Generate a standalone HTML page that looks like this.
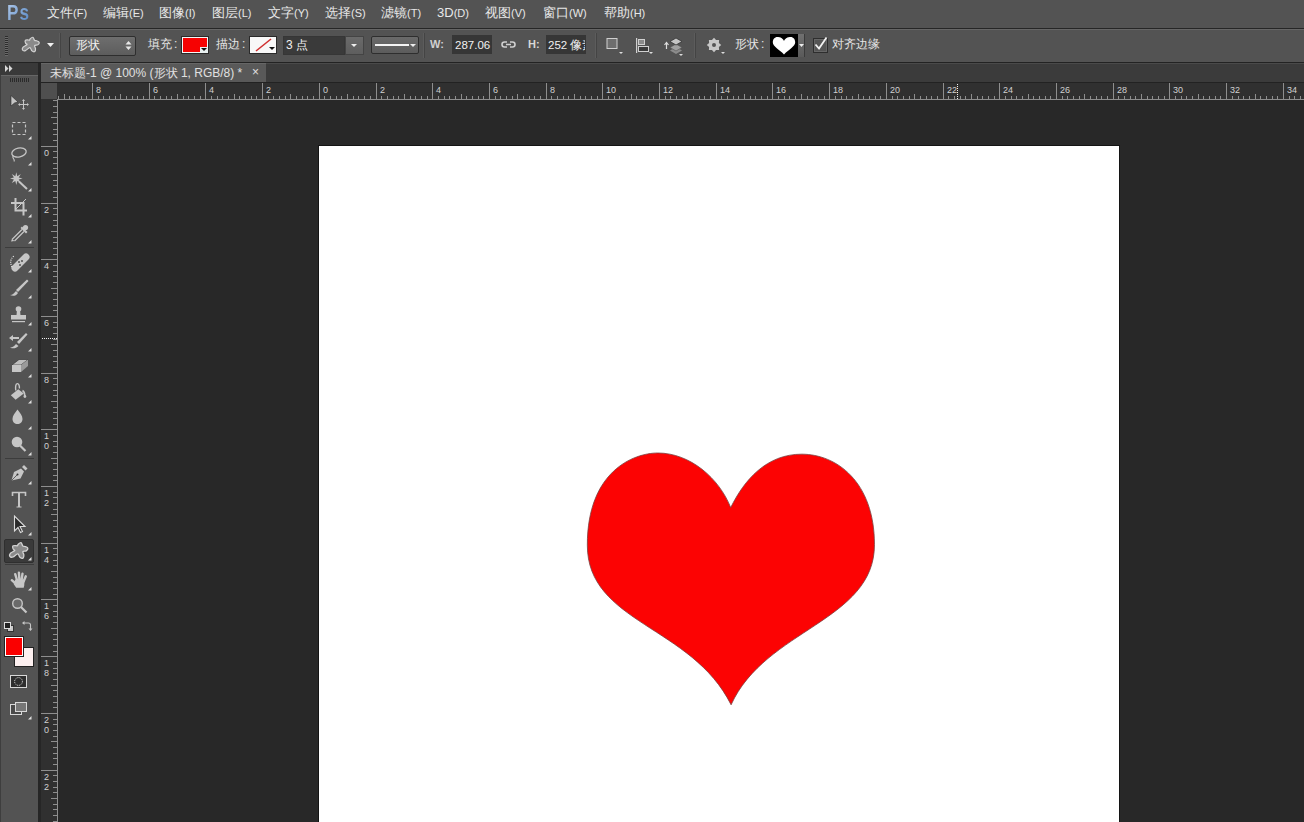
<!DOCTYPE html><html><head><meta charset="utf-8"><style>
*{box-sizing:border-box}
html,body{margin:0;padding:0}
body{width:1304px;height:822px;overflow:hidden;position:relative;background:#282828;font-family:"Liberation Sans",sans-serif;color:#e6e6e6}
.a{position:absolute}
.mi{position:absolute;top:5px;font-size:13px;line-height:16px;white-space:nowrap;color:#e8e8e8}
.mi span{font-size:11px}
.lbl{position:absolute;font-size:12px;line-height:14px;color:#e6e6e6;white-space:nowrap}
</style></head><body>
<div class="a" style="left:0;top:0;width:1304px;height:28px;background:#535353"></div>
<div class="a" style="left:7px;top:1px;font-size:22px;line-height:24px;font-weight:bold;color:#8db0dc;letter-spacing:1.5px;transform:scaleX(0.78);transform-origin:0 0;background:linear-gradient(135deg,#b4ccec,#4f82c0);-webkit-background-clip:text;background-clip:text;-webkit-text-fill-color:transparent">Ps</div>
<div class="mi" style="left:47px">文件<span>(F)</span></div>
<div class="mi" style="left:103px">编辑<span>(E)</span></div>
<div class="mi" style="left:159px">图像<span>(I)</span></div>
<div class="mi" style="left:212px">图层<span>(L)</span></div>
<div class="mi" style="left:268px">文字<span>(Y)</span></div>
<div class="mi" style="left:325px">选择<span>(S)</span></div>
<div class="mi" style="left:381px">滤镜<span>(T)</span></div>
<div class="mi" style="left:437px">3D<span>(D)</span></div>
<div class="mi" style="left:485px">视图<span>(V)</span></div>
<div class="mi" style="left:543px">窗口<span>(W)</span></div>
<div class="mi" style="left:604px">帮助<span>(H)</span></div>
<div class="a" style="left:0;top:28px;width:1304px;height:1px;background:#262626"></div>
<div class="a" style="left:0;top:29px;width:1304px;height:1px;background:#666"></div>
<div class="a" style="left:0;top:30px;width:1304px;height:32px;background:#535353"></div>
<div class="a" style="left:0;top:62px;width:1304px;height:1px;background:#232323"></div>
<div class="a" style="left:0;top:63px;width:1304px;height:1px;background:#4a4a4a"></div>
<div class="a" style="left:5px;top:36px;width:3px;height:1px;background:#2c2c2c"></div><div class="a" style="left:5px;top:37px;width:3px;height:1px;background:#6a6a6a"></div><div class="a" style="left:5px;top:38px;width:3px;height:1px;background:#2c2c2c"></div><div class="a" style="left:5px;top:39px;width:3px;height:1px;background:#6a6a6a"></div><div class="a" style="left:5px;top:40px;width:3px;height:1px;background:#2c2c2c"></div><div class="a" style="left:5px;top:41px;width:3px;height:1px;background:#6a6a6a"></div><div class="a" style="left:5px;top:42px;width:3px;height:1px;background:#2c2c2c"></div><div class="a" style="left:5px;top:43px;width:3px;height:1px;background:#6a6a6a"></div><div class="a" style="left:5px;top:44px;width:3px;height:1px;background:#2c2c2c"></div><div class="a" style="left:5px;top:45px;width:3px;height:1px;background:#6a6a6a"></div><div class="a" style="left:5px;top:46px;width:3px;height:1px;background:#2c2c2c"></div><div class="a" style="left:5px;top:47px;width:3px;height:1px;background:#6a6a6a"></div><div class="a" style="left:5px;top:48px;width:3px;height:1px;background:#2c2c2c"></div><div class="a" style="left:5px;top:49px;width:3px;height:1px;background:#6a6a6a"></div><div class="a" style="left:5px;top:50px;width:3px;height:1px;background:#2c2c2c"></div><div class="a" style="left:5px;top:51px;width:3px;height:1px;background:#6a6a6a"></div><div class="a" style="left:5px;top:52px;width:3px;height:1px;background:#2c2c2c"></div><div class="a" style="left:5px;top:53px;width:3px;height:1px;background:#6a6a6a"></div><div class="a" style="left:5px;top:54px;width:3px;height:1px;background:#2c2c2c"></div><div class="a" style="left:5px;top:55px;width:3px;height:1px;background:#6a6a6a"></div><svg class="a" style="left:18px;top:32px" width="26" height="26" viewBox="0 0 26 26"><path d="M12.27 6.67 C12.82 6.19 14.23 5.09 14.90 5.30 C15.57 5.51 15.92 7.38 16.27 7.93 C16.62 8.48 16.61 8.45 17.00 8.60 C17.39 8.75 17.93 8.53 18.63 8.81 C19.33 9.10 21.02 9.62 21.20 10.30 C21.38 10.98 20.48 12.32 19.71 12.87 C18.95 13.42 16.97 12.96 16.60 13.60 C16.23 14.24 17.49 15.72 17.52 16.72 C17.55 17.72 17.40 19.24 16.80 19.60 C16.20 19.96 14.75 19.55 13.92 18.88 C13.09 18.21 12.88 15.65 11.80 15.60 C10.72 15.55 8.63 18.18 7.41 18.58 C6.20 18.98 4.89 18.58 4.50 18.00 C4.11 17.42 4.33 15.99 5.08 15.09 C5.83 14.19 8.58 13.24 9.00 12.60 C9.42 11.96 7.89 11.97 7.61 11.25 C7.32 10.54 6.86 8.84 7.30 8.30 C7.74 7.76 9.54 8.01 10.25 7.99 C10.97 7.98 11.26 8.42 11.60 8.20 C11.94 7.98 11.72 7.16 12.27 6.67Z" fill="#8a8a8a" stroke="#d4d4d4" stroke-width="1.2"/></svg><svg class="a" style="left:47px;top:43px" width="8" height="5"><path d="M0 0H7L3.5 4Z" fill="#f0f0f0"/></svg><div class="a" style="left:60px;top:33px;width:1px;height:25px;background:#444"></div><div class="a" style="left:59px;top:33px;width:1px;height:25px;background:#5c5c5c"></div><div class="a" style="left:69px;top:36px;width:67px;height:20px;border:1px solid #2e2e2e;border-radius:2px;background:linear-gradient(#6e6e6e,#5d5d5d)"></div><div class="lbl" style="left:76px;top:38px;font-size:12px;color:#f2f2f2">形状</div><svg class="a" style="left:125px;top:40px" width="8" height="12"><path d="M0.5 4.5L3.5 1L6.5 4.5Z M0.5 6.5L3.5 10L6.5 6.5Z" fill="#e8e8e8"/></svg><div class="lbl" style="left:148px;top:37px;font-size:12px">填充<span style="margin-left:2px">:</span></div><div class="a" style="left:181px;top:36px;width:28px;height:18px;background:#2a2a2a"></div><div class="a" style="left:182px;top:37px;width:26px;height:16px;background:#f5f5f5"></div><div class="a" style="left:183px;top:38px;width:24px;height:14px;background:#f60202"></div><div class="a" style="left:200px;top:47px;width:8px;height:6px;background:#e8f0f0"></div><svg class="a" style="left:201px;top:48px" width="7" height="4"><path d="M0 0H6L3 3Z" fill="#111"/></svg><div class="lbl" style="left:216px;top:37px;font-size:12px">描边<span style="margin-left:2px">:</span></div><div class="a" style="left:249px;top:36px;width:28px;height:18px;background:#2a2a2a"></div><div class="a" style="left:250px;top:37px;width:26px;height:16px;background:#f8f8f8"></div><svg class="a" style="left:250px;top:37px" width="26" height="16"><path d="M6 14L21 2" stroke="#d03030" stroke-width="1.6"/><path d="M19 10H25L22 13Z" fill="#111"/></svg><div class="a" style="left:283px;top:36px;width:62px;height:19px;background:#3a3a3a;border:1px solid #363636"></div><div class="lbl" style="left:286px;top:38px;font-size:12px;color:#f0f0f0">3 点</div><div class="a" style="left:345px;top:36px;width:19px;height:19px;background:linear-gradient(#6a6a6a,#5e5e5e);border:1px solid #444"></div><svg class="a" style="left:351px;top:44px" width="7" height="4"><path d="M0 0H6L3 3Z" fill="#eee"/></svg><div class="a" style="left:371px;top:36px;width:48px;height:18px;background:linear-gradient(#6a6a6a,#5c5c5c);border:1px solid #2e2e2e;border-radius:2px"></div><div class="a" style="left:375px;top:44px;width:34px;height:2px;background:#f4f4f4"></div><svg class="a" style="left:410px;top:44px" width="7" height="4"><path d="M0 0H6L3 3Z" fill="#eee"/></svg><div class="a" style="left:424px;top:33px;width:1px;height:25px;background:#444"></div><div class="a" style="left:423px;top:33px;width:1px;height:25px;background:#5c5c5c"></div><div class="lbl" style="left:430px;top:37px;font-size:11px;font-weight:bold;color:#d0d0d0">W:</div><div class="a" style="left:452px;top:35px;width:40px;height:19px;background:#363636"></div><div class="lbl" style="left:455px;top:38px;font-size:11.5px;color:#f0f0f0">287.06</div><svg class="a" style="left:500px;top:39px" width="18" height="12"><path d="M7 3H4.5A2.5 2.5 0 0 0 4.5 8H7M10 3H12.5A2.5 2.5 0 0 1 12.5 8H10M6 5.5H11" fill="none" stroke="#d0d0d0" stroke-width="1.6"/></svg><div class="lbl" style="left:528px;top:37px;font-size:11px;font-weight:bold;color:#d8d8d8">H:</div><div class="a" style="left:546px;top:35px;width:40px;height:19px;background:#363636"></div><div class="lbl" style="left:548px;top:38px;font-size:11.5px;color:#f0f0f0;width:37px;overflow:hidden">252 像素</div><div class="a" style="left:596px;top:33px;width:1px;height:25px;background:#444"></div><div class="a" style="left:595px;top:33px;width:1px;height:25px;background:#5c5c5c"></div><svg class="a" style="left:604px;top:36px" width="20" height="20"><rect x="3" y="2.5" width="10" height="10" fill="#6e6e6e" stroke="#cfcfcf" stroke-width="1"/><path d="M15 16H19L17 18Z" fill="#ddd"/></svg><svg class="a" style="left:633px;top:36px" width="22" height="20"><rect x="3" y="2" width="1.2" height="15" fill="#d0d0d0"/><rect x="5.5" y="3.5" width="6" height="5" fill="#8a8a8a" stroke="#d0d0d0" stroke-width="1"/><rect x="5.5" y="10.5" width="10" height="5" fill="#3a3a3a" stroke="#d0d0d0" stroke-width="1"/><path d="M16 16H20L18 18Z" fill="#ddd"/></svg><svg class="a" style="left:662px;top:35px" width="24" height="22"><path d="M4.5 14V8M2.5 10L4.5 7.5L6.5 10" stroke="#ddd" stroke-width="1.2" fill="none"/><path d="M14 12L20 15.5L14 19L8 15.5Z" fill="#8c8c8c"/><path d="M14 9L20 12.5L14 16L8 12.5Z" fill="#a0a0a0" stroke="#555" stroke-width="0.6"/><path d="M14 3L20 6.5L14 10L8 6.5Z" fill="#c4c4c4" stroke="#333" stroke-width="0.8"/><path d="M17 19H21L19 21Z" fill="#ddd"/></svg><div class="a" style="left:695px;top:33px;width:1px;height:25px;background:#444"></div><div class="a" style="left:694px;top:33px;width:1px;height:25px;background:#5c5c5c"></div><svg class="a" style="left:700px;top:36px" width="28" height="20"><path d="M14.00 1.80 L16.03 4.10 L19.09 3.91 L18.90 6.97 L21.20 9.00 L18.90 11.03 L19.09 14.09 L16.03 13.90 L14.00 16.20 L11.97 13.90 L8.91 14.09 L9.10 11.03 L6.80 9.00 L9.10 6.97 L8.91 3.91 L11.97 4.10Z" fill="#c8c8c8"/><circle cx="14" cy="9" r="2" fill="#555"/><path d="M21 16H25L23 18Z" fill="#ddd"/></svg><div class="lbl" style="left:735px;top:37px;font-size:12px">形状<span style="margin-left:2px">:</span></div><div class="a" style="left:770px;top:34px;width:28px;height:23px;background:#000"></div><svg class="a" style="left:772px;top:36px" width="24" height="19" viewBox="0 0 24 19"><path d="M12 5 C10.5 1.5 7.5 1 5.5 1 C2.5 1 0.8 3.5 0.8 6.2 C0.8 10.5 7 13 12 18.5 C17 13 23.2 10.5 23.2 6.2 C23.2 3.5 21.5 1 18.5 1 C16.5 1 13.5 1.5 12 5Z" fill="#fff"/></svg><div class="a" style="left:798px;top:34px;width:7px;height:23px;background:linear-gradient(#707070,#5a5a5a);border-right:1px solid #3a3a3a"></div><svg class="a" style="left:799px;top:44px" width="6" height="4"><path d="M0 0H5L2.5 3Z" fill="#eee"/></svg><div class="a" style="left:813px;top:38px;width:15px;height:15px;background:#555;border:1px solid #2e2e2e;box-shadow:inset 0 0 0 1px #666"></div><svg class="a" style="left:812px;top:34px" width="20" height="18"><path d="M3.5 10.5L7 14.5L14.5 3.5" fill="none" stroke="#f2f2f2" stroke-width="1.8"/></svg><div class="lbl" style="left:832px;top:37px;font-size:12px">对齐边缘</div>
<div class="a" style="left:41px;top:64px;width:1263px;height:18px;background:#3b3b3b"></div>
<div class="a" style="left:41px;top:63px;width:225px;height:19px;background:#595959;border-top:1px solid #666"></div>
<div class="lbl" style="left:50px;top:66px;font-size:12px;color:#e0e0e0">未标题-1 @ 100% (形状 1, RGB/8) *</div>
<div class="lbl" style="left:252px;top:65px;font-size:12px;color:#e0e0e0">×</div>
<div class="a" style="left:41px;top:82px;width:1263px;height:1px;background:#222"></div>
<div class="a" style="left:0;top:63px;width:38px;height:759px;background:#535353;border-left:1px solid #3e3e3e"></div>
<div class="a" style="left:0;top:63px;width:38px;height:12px;background:#393939"></div>
<div class="a" style="left:1px;top:75px;width:37px;height:1px;background:#666"></div>
<div class="a" style="left:38px;top:63px;width:3px;height:759px;background:#262626"></div>
<svg class="a" style="left:5px;top:65px" width="9" height="7"><path d="M0 0L3.5 3.5L0 7Z M4 0L7.5 3.5L4 7Z" fill="#d8d8d8"/></svg><div class="a" style="left:10px;top:78px;width:1px;height:4px;background:#2a2a2a"></div><div class="a" style="left:12px;top:78px;width:1px;height:4px;background:#2a2a2a"></div><div class="a" style="left:14px;top:78px;width:1px;height:4px;background:#2a2a2a"></div><div class="a" style="left:16px;top:78px;width:1px;height:4px;background:#2a2a2a"></div><div class="a" style="left:18px;top:78px;width:1px;height:4px;background:#2a2a2a"></div><div class="a" style="left:20px;top:78px;width:1px;height:4px;background:#2a2a2a"></div><div class="a" style="left:22px;top:78px;width:1px;height:4px;background:#2a2a2a"></div><div class="a" style="left:24px;top:78px;width:1px;height:4px;background:#2a2a2a"></div><div class="a" style="left:26px;top:78px;width:1px;height:4px;background:#2a2a2a"></div><div class="a" style="left:28px;top:78px;width:1px;height:4px;background:#2a2a2a"></div><svg class="a" style="left:6px;top:92px" width="26" height="22" viewBox="0 0 26 22"><path d="M5 3.5V14L8.5 11L12 10Z" fill="#c6c6c6" stroke="#2a2a2a" stroke-width="0.6"/><path d="M17.5 8V17M13 12.5H22" stroke="#c6c6c6" stroke-width="1"/><path d="M17.5 7L16 9H19Z M17.5 18L16 16H19Z M12 12.5L14 11V14Z M23 12.5L21 11V14Z" fill="#c6c6c6"/></svg><svg class="a" style="left:6px;top:118px" width="26" height="22" viewBox="0 0 26 22"><rect x="6.5" y="4.5" width="13" height="12" fill="none" stroke="#c6c6c6" stroke-width="1.2" stroke-dasharray="3 2"/></svg><svg class="a" style="left:28px;top:136px" width="4" height="4"><path d="M3.5 0V3.5H0Z" fill="#e0e0e0"/></svg><svg class="a" style="left:6px;top:143px" width="26" height="22" viewBox="0 0 26 22"><ellipse cx="13" cy="9.5" rx="7.3" ry="4.5" transform="rotate(-12 13 9.5)" fill="none" stroke="#c6c6c6" stroke-width="1.3"/><path d="M7.5 12.5C6 14 7 15 8 16.5C8.5 17.5 8 18.5 8 18.5" fill="none" stroke="#c6c6c6" stroke-width="1.1"/></svg><svg class="a" style="left:28px;top:162px" width="4" height="4"><path d="M3.5 0V3.5H0Z" fill="#e0e0e0"/></svg><svg class="a" style="left:6px;top:170px" width="26" height="22" viewBox="0 0 26 22"><path d="M16.6 8.6 L12.7 9.6 L14.8 13.1 L11.3 11.0 L10.3 14.9 L9.3 11.0 L5.8 13.1 L7.9 9.6 L4.0 8.6 L7.9 7.6 L5.8 4.1 L9.3 6.2 L10.3 2.3 L11.3 6.2 L14.8 4.1 L12.7 7.6Z" fill="#c6c6c6"/><path d="M13 11.5L21 19" stroke="#c6c6c6" stroke-width="2"/></svg><svg class="a" style="left:28px;top:188px" width="4" height="4"><path d="M3.5 0V3.5H0Z" fill="#e0e0e0"/></svg><svg class="a" style="left:6px;top:196px" width="26" height="22" viewBox="0 0 26 22"><path d="M9.5 2V14.5H21M5 7H17.5V19.5" fill="none" stroke="#c6c6c6" stroke-width="2"/><path d="M10 13L20 3" stroke="#c6c6c6" stroke-width="1"/></svg><svg class="a" style="left:28px;top:214px" width="4" height="4"><path d="M3.5 0V3.5H0Z" fill="#e0e0e0"/></svg><svg class="a" style="left:6px;top:222px" width="26" height="22" viewBox="0 0 26 22"><path d="M6 17.5L16 7.5M8.5 19L18 9.5" stroke="#c6c6c6" stroke-width="1.2"/><path d="M5 19.5L6 17L8.5 19Z" fill="#c6c6c6"/><path d="M14.5 6L20 11.5L21.5 10L16 4.5Z" fill="#c6c6c6"/><circle cx="19.5" cy="5.5" r="2.6" fill="#c6c6c6"/></svg><svg class="a" style="left:28px;top:240px" width="4" height="4"><path d="M3.5 0V3.5H0Z" fill="#e0e0e0"/></svg><div class="a" style="left:5px;top:247px;width:29px;height:1px;background:#3c3c3c"></div><svg class="a" style="left:6px;top:251px" width="26" height="22" viewBox="0 0 26 22"><path d="M9 17L20 6" stroke="#c6c6c6" stroke-width="7" stroke-linecap="round"/><circle cx="13" cy="11" r="0.9" fill="#444"/><circle cx="16" cy="10" r="0.9" fill="#444"/><circle cx="14" cy="14" r="0.9" fill="#444"/><path d="M6 16C4 12 4 8 8 5" fill="none" stroke="#eee" stroke-width="1.2" stroke-dasharray="1 1.2"/></svg><svg class="a" style="left:28px;top:269px" width="4" height="4"><path d="M3.5 0V3.5H0Z" fill="#e0e0e0"/></svg><svg class="a" style="left:6px;top:277px" width="26" height="22" viewBox="0 0 26 22"><path d="M10 13L21 2.5L22.5 4L12 15Z" fill="#c6c6c6"/><path d="M4 18C7 18 8 16 10 14L12 16C10 19 7 19.5 4 18Z" fill="#c6c6c6"/></svg><svg class="a" style="left:28px;top:295px" width="4" height="4"><path d="M3.5 0V3.5H0Z" fill="#e0e0e0"/></svg><svg class="a" style="left:6px;top:303px" width="26" height="22" viewBox="0 0 26 22"><circle cx="12.5" cy="6" r="2.8" fill="#c6c6c6"/><path d="M11 7H14L14.5 12H10.5Z" fill="#c6c6c6"/><rect x="5" y="12" width="15" height="4.5" fill="#c6c6c6"/><rect x="6" y="18" width="13" height="1.2" fill="#c6c6c6"/></svg><svg class="a" style="left:28px;top:322px" width="4" height="4"><path d="M3.5 0V3.5H0Z" fill="#e0e0e0"/></svg><svg class="a" style="left:6px;top:329px" width="26" height="22" viewBox="0 0 26 22"><path d="M3 9L7 6V8H13V10H7V12Z" fill="#c6c6c6"/><path d="M11 13L20 4L21.5 5.5L13 15Z" fill="#c6c6c6"/><path d="M4 18.5C7 18.5 8 17 10 15L12.5 17C10 19.5 7 20 4 18.5Z" fill="#c6c6c6"/></svg><svg class="a" style="left:28px;top:348px" width="4" height="4"><path d="M3.5 0V3.5H0Z" fill="#e0e0e0"/></svg><svg class="a" style="left:6px;top:355px" width="26" height="22" viewBox="0 0 26 22"><path d="M6 10L13 4.5H22L15 10Z" fill="#bdbdbd" stroke="#2a2a2a" stroke-width="0.6"/><path d="M6 10H15V17H6Z" fill="#c6c6c6"/><path d="M15 10L22 4.5V11L15 17Z" fill="#9a9a9a"/></svg><svg class="a" style="left:28px;top:374px" width="4" height="4"><path d="M3.5 0V3.5H0Z" fill="#e0e0e0"/></svg><svg class="a" style="left:6px;top:381px" width="26" height="22" viewBox="0 0 26 22"><path d="M9.8 9.5C9.3 6 9.6 2.8 11.2 2.6C12.8 2.4 13.6 5 13.4 7.5" fill="none" stroke="#c6c6c6" stroke-width="1.4"/><path d="M12.3 8.2L17.8 12.6L9.6 18.8L4.8 14.2Z" fill="#c6c6c6"/><path d="M16.5 9.5C18.2 10.5 18.8 12.5 18.8 15" fill="none" stroke="#c6c6c6" stroke-width="1.5"/><circle cx="18.9" cy="15.5" r="1.4" fill="#c6c6c6"/></svg><svg class="a" style="left:28px;top:400px" width="4" height="4"><path d="M3.5 0V3.5H0Z" fill="#e0e0e0"/></svg><svg class="a" style="left:6px;top:407px" width="26" height="22" viewBox="0 0 26 22"><path d="M11.5 2.5C9 6 6.5 8.5 6.5 12C6.5 15 8.8 17 11.5 17C14.2 17 16.5 15 16.5 12C16.5 8.5 14 6 11.5 2.5Z" fill="#c6c6c6"/></svg><svg class="a" style="left:28px;top:426px" width="4" height="4"><path d="M3.5 0V3.5H0Z" fill="#e0e0e0"/></svg><svg class="a" style="left:6px;top:433px" width="26" height="22" viewBox="0 0 26 22"><circle cx="11" cy="9" r="5.3" fill="#c6c6c6"/><path d="M14 12.5L19.5 18" stroke="#c6c6c6" stroke-width="2.2"/></svg><svg class="a" style="left:28px;top:452px" width="4" height="4"><path d="M3.5 0V3.5H0Z" fill="#e0e0e0"/></svg><div class="a" style="left:5px;top:458px;width:29px;height:1px;background:#3c3c3c"></div><svg class="a" style="left:6px;top:462px" width="26" height="22" viewBox="0 0 26 22"><path d="M5.5 18.5L8 10L15 6.5L18 9.5L14.5 16.5Z" fill="#c6c6c6"/><path d="M16 5L19.5 8.5L21.5 6.5L18 3Z" fill="#c6c6c6"/><path d="M5.5 18.5L11 13" stroke="#333" stroke-width="0.7"/><circle cx="11.5" cy="12.5" r="1" fill="#333"/></svg><svg class="a" style="left:28px;top:481px" width="4" height="4"><path d="M3.5 0V3.5H0Z" fill="#e0e0e0"/></svg><svg class="a" style="left:6px;top:488px" width="26" height="22" viewBox="0 0 26 22"><path d="M6.5 8V4.5H19.5V8" fill="none" stroke="#c6c6c6" stroke-width="1.6"/><path d="M13 4.5V19" stroke="#c6c6c6" stroke-width="2"/><path d="M10.5 19H15.5" stroke="#c6c6c6" stroke-width="1"/></svg><svg class="a" style="left:6px;top:513px" width="26" height="22" viewBox="0 0 26 22"><path d="M8.5 3V18L12 14.5L14.5 19.5L16.5 18.5L14 13.5H19Z" fill="#2a2a2a" stroke="#dcdcdc" stroke-width="1.1"/></svg><svg class="a" style="left:28px;top:532px" width="4" height="4"><path d="M3.5 0V3.5H0Z" fill="#e0e0e0"/></svg><div class="a" style="left:4px;top:539px;width:30px;height:24px;background:#3a3a3a;border:1px solid #2f2f2f;border-radius:2px"></div><svg class="a" style="left:5px;top:537px" width="28" height="28" viewBox="0 0 26 26"><path d="M12.27 6.67 C12.82 6.19 14.23 5.09 14.90 5.30 C15.57 5.51 15.92 7.38 16.27 7.93 C16.62 8.48 16.61 8.45 17.00 8.60 C17.39 8.75 17.93 8.53 18.63 8.81 C19.33 9.10 21.02 9.62 21.20 10.30 C21.38 10.98 20.48 12.32 19.71 12.87 C18.95 13.42 16.97 12.96 16.60 13.60 C16.23 14.24 17.49 15.72 17.52 16.72 C17.55 17.72 17.40 19.24 16.80 19.60 C16.20 19.96 14.75 19.55 13.92 18.88 C13.09 18.21 12.88 15.65 11.80 15.60 C10.72 15.55 8.63 18.18 7.41 18.58 C6.20 18.98 4.89 18.58 4.50 18.00 C4.11 17.42 4.33 15.99 5.08 15.09 C5.83 14.19 8.58 13.24 9.00 12.60 C9.42 11.96 7.89 11.97 7.61 11.25 C7.32 10.54 6.86 8.84 7.30 8.30 C7.74 7.76 9.54 8.01 10.25 7.99 C10.97 7.98 11.26 8.42 11.60 8.20 C11.94 7.98 11.72 7.16 12.27 6.67Z" fill="#8a8a8a" stroke="#d4d4d4" stroke-width="1.2"/></svg><svg class="a" style="left:28px;top:557px" width="4" height="4"><path d="M3.5 0V3.5H0Z" fill="#e0e0e0"/></svg><div class="a" style="left:5px;top:564px;width:29px;height:1px;background:#3c3c3c"></div><svg class="a" style="left:6px;top:569px" width="26" height="22" viewBox="0 0 26 22"><g stroke="#c6c6c6" stroke-width="2.4" stroke-linecap="round"><path d="M11.3 12L9.2 5.2M13.4 11L12.9 3.6M15.6 11L16.5 4.6M17.6 12.5L19.8 7.3M10.2 15L5.8 11.2"/></g><path d="M9.3 10.5H18.6L18.2 16.5L17.7 18.8H10.2L7.6 15Z" fill="#c6c6c6"/></svg><svg class="a" style="left:28px;top:587px" width="4" height="4"><path d="M3.5 0V3.5H0Z" fill="#e0e0e0"/></svg><svg class="a" style="left:6px;top:593px" width="26" height="22" viewBox="0 0 26 22"><circle cx="11.5" cy="10.5" r="4.8" fill="#6a6a6a" stroke="#c6c6c6" stroke-width="1.4"/><path d="M15 14L20.5 19.5" stroke="#c6c6c6" stroke-width="2.2"/></svg><div class="a" style="left:7px;top:625px;width:7px;height:7px;background:#c8c8c8;border:1px solid #333"></div><div class="a" style="left:4px;top:622px;width:7px;height:7px;background:#222;border:1px solid #ddd"></div><svg class="a" style="left:21px;top:620px" width="12" height="12"><path d="M2.5 3H7.5C9 3 9.5 4 9.5 5V9" fill="none" stroke="#c6c6c6" stroke-width="1.1"/><path d="M1 3L3.5 1V5Z M9.5 11L7.5 8.5H11.5Z" fill="#c6c6c6"/></svg><div class="a" style="left:14px;top:647px;width:20px;height:20px;background:#222"></div><div class="a" style="left:15px;top:648px;width:18px;height:18px;background:#fdf0f0"></div><div class="a" style="left:4px;top:636px;width:20px;height:21px;background:#222"></div><div class="a" style="left:5px;top:637px;width:18px;height:19px;background:#fff"></div><div class="a" style="left:6px;top:638px;width:16px;height:17px;background:#fa0000"></div><div class="a" style="left:10px;top:675px;width:17px;height:13px;background:#2e2e2e;border:1px solid #d8d8d8"></div><svg class="a" style="left:13px;top:676px" width="11" height="11"><circle cx="5.5" cy="5.5" r="3.9" fill="none" stroke="#eee" stroke-width="1" stroke-dasharray="1 1.1"/></svg><div class="a" style="left:10px;top:704px;width:12px;height:11px;background:#4a4a4a;border:1px solid #d8d8d8"></div><div class="a" style="left:15px;top:702px;width:12px;height:10px;background:#777;border:1px solid #d8d8d8"></div><svg class="a" style="left:28px;top:716px" width="4" height="4"><path d="M3.5 0V3.5H0Z" fill="#e0e0e0"/></svg>
<div class="a" style="left:41px;top:83px;width:16px;height:16px;background:#4f4f4f"></div>
<div class="a" style="left:57px;top:83px;width:1247px;height:16px;background:#303030"></div>
<div class="a" style="left:41px;top:99px;width:16px;height:723px;background:#303030"></div>
<svg width="1247" height="17" style="position:absolute;left:57px;top:83px" shape-rendering="crispEdges"><rect x="0" y="16" width="1247" height="1" fill="#8e8e8e"/><rect x="1" y="13" width="1" height="3" fill="#8e8e8e"/><rect x="7" y="11" width="1" height="5" fill="#8e8e8e"/><rect x="12" y="13" width="1" height="3" fill="#8e8e8e"/><rect x="18" y="13" width="1" height="3" fill="#8e8e8e"/><rect x="24" y="13" width="1" height="3" fill="#8e8e8e"/><rect x="29" y="13" width="1" height="3" fill="#8e8e8e"/><rect x="35" y="0" width="1" height="16" fill="#8e8e8e"/><text x="39" y="10" font-size="9" fill="#d0d0d0" font-family="Liberation Sans, sans-serif">8</text><rect x="41" y="13" width="1" height="3" fill="#8e8e8e"/><rect x="46" y="13" width="1" height="3" fill="#8e8e8e"/><rect x="52" y="13" width="1" height="3" fill="#8e8e8e"/><rect x="58" y="13" width="1" height="3" fill="#8e8e8e"/><rect x="63" y="11" width="1" height="5" fill="#8e8e8e"/><rect x="69" y="13" width="1" height="3" fill="#8e8e8e"/><rect x="75" y="13" width="1" height="3" fill="#8e8e8e"/><rect x="80" y="13" width="1" height="3" fill="#8e8e8e"/><rect x="86" y="13" width="1" height="3" fill="#8e8e8e"/><rect x="92" y="0" width="1" height="16" fill="#8e8e8e"/><text x="96" y="10" font-size="9" fill="#d0d0d0" font-family="Liberation Sans, sans-serif">6</text><rect x="97" y="13" width="1" height="3" fill="#8e8e8e"/><rect x="103" y="13" width="1" height="3" fill="#8e8e8e"/><rect x="109" y="13" width="1" height="3" fill="#8e8e8e"/><rect x="114" y="13" width="1" height="3" fill="#8e8e8e"/><rect x="120" y="11" width="1" height="5" fill="#8e8e8e"/><rect x="126" y="13" width="1" height="3" fill="#8e8e8e"/><rect x="131" y="13" width="1" height="3" fill="#8e8e8e"/><rect x="137" y="13" width="1" height="3" fill="#8e8e8e"/><rect x="143" y="13" width="1" height="3" fill="#8e8e8e"/><rect x="148" y="0" width="1" height="16" fill="#8e8e8e"/><text x="152" y="10" font-size="9" fill="#d0d0d0" font-family="Liberation Sans, sans-serif">4</text><rect x="154" y="13" width="1" height="3" fill="#8e8e8e"/><rect x="160" y="13" width="1" height="3" fill="#8e8e8e"/><rect x="165" y="13" width="1" height="3" fill="#8e8e8e"/><rect x="171" y="13" width="1" height="3" fill="#8e8e8e"/><rect x="177" y="11" width="1" height="5" fill="#8e8e8e"/><rect x="182" y="13" width="1" height="3" fill="#8e8e8e"/><rect x="188" y="13" width="1" height="3" fill="#8e8e8e"/><rect x="194" y="13" width="1" height="3" fill="#8e8e8e"/><rect x="199" y="13" width="1" height="3" fill="#8e8e8e"/><rect x="205" y="0" width="1" height="16" fill="#8e8e8e"/><text x="209" y="10" font-size="9" fill="#d0d0d0" font-family="Liberation Sans, sans-serif">2</text><rect x="211" y="13" width="1" height="3" fill="#8e8e8e"/><rect x="216" y="13" width="1" height="3" fill="#8e8e8e"/><rect x="222" y="13" width="1" height="3" fill="#8e8e8e"/><rect x="228" y="13" width="1" height="3" fill="#8e8e8e"/><rect x="233" y="11" width="1" height="5" fill="#8e8e8e"/><rect x="239" y="13" width="1" height="3" fill="#8e8e8e"/><rect x="245" y="13" width="1" height="3" fill="#8e8e8e"/><rect x="250" y="13" width="1" height="3" fill="#8e8e8e"/><rect x="256" y="13" width="1" height="3" fill="#8e8e8e"/><rect x="262" y="0" width="1" height="16" fill="#8e8e8e"/><text x="266" y="10" font-size="9" fill="#d0d0d0" font-family="Liberation Sans, sans-serif">0</text><rect x="267" y="13" width="1" height="3" fill="#8e8e8e"/><rect x="273" y="13" width="1" height="3" fill="#8e8e8e"/><rect x="279" y="13" width="1" height="3" fill="#8e8e8e"/><rect x="284" y="13" width="1" height="3" fill="#8e8e8e"/><rect x="290" y="11" width="1" height="5" fill="#8e8e8e"/><rect x="296" y="13" width="1" height="3" fill="#8e8e8e"/><rect x="301" y="13" width="1" height="3" fill="#8e8e8e"/><rect x="307" y="13" width="1" height="3" fill="#8e8e8e"/><rect x="313" y="13" width="1" height="3" fill="#8e8e8e"/><rect x="319" y="0" width="1" height="16" fill="#8e8e8e"/><text x="323" y="10" font-size="9" fill="#d0d0d0" font-family="Liberation Sans, sans-serif">2</text><rect x="324" y="13" width="1" height="3" fill="#8e8e8e"/><rect x="330" y="13" width="1" height="3" fill="#8e8e8e"/><rect x="336" y="13" width="1" height="3" fill="#8e8e8e"/><rect x="341" y="13" width="1" height="3" fill="#8e8e8e"/><rect x="347" y="11" width="1" height="5" fill="#8e8e8e"/><rect x="353" y="13" width="1" height="3" fill="#8e8e8e"/><rect x="358" y="13" width="1" height="3" fill="#8e8e8e"/><rect x="364" y="13" width="1" height="3" fill="#8e8e8e"/><rect x="370" y="13" width="1" height="3" fill="#8e8e8e"/><rect x="375" y="0" width="1" height="16" fill="#8e8e8e"/><text x="379" y="10" font-size="9" fill="#d0d0d0" font-family="Liberation Sans, sans-serif">4</text><rect x="381" y="13" width="1" height="3" fill="#8e8e8e"/><rect x="387" y="13" width="1" height="3" fill="#8e8e8e"/><rect x="392" y="13" width="1" height="3" fill="#8e8e8e"/><rect x="398" y="13" width="1" height="3" fill="#8e8e8e"/><rect x="404" y="11" width="1" height="5" fill="#8e8e8e"/><rect x="409" y="13" width="1" height="3" fill="#8e8e8e"/><rect x="415" y="13" width="1" height="3" fill="#8e8e8e"/><rect x="421" y="13" width="1" height="3" fill="#8e8e8e"/><rect x="426" y="13" width="1" height="3" fill="#8e8e8e"/><rect x="432" y="0" width="1" height="16" fill="#8e8e8e"/><text x="436" y="10" font-size="9" fill="#d0d0d0" font-family="Liberation Sans, sans-serif">6</text><rect x="438" y="13" width="1" height="3" fill="#8e8e8e"/><rect x="443" y="13" width="1" height="3" fill="#8e8e8e"/><rect x="449" y="13" width="1" height="3" fill="#8e8e8e"/><rect x="455" y="13" width="1" height="3" fill="#8e8e8e"/><rect x="460" y="11" width="1" height="5" fill="#8e8e8e"/><rect x="466" y="13" width="1" height="3" fill="#8e8e8e"/><rect x="472" y="13" width="1" height="3" fill="#8e8e8e"/><rect x="477" y="13" width="1" height="3" fill="#8e8e8e"/><rect x="483" y="13" width="1" height="3" fill="#8e8e8e"/><rect x="489" y="0" width="1" height="16" fill="#8e8e8e"/><text x="493" y="10" font-size="9" fill="#d0d0d0" font-family="Liberation Sans, sans-serif">8</text><rect x="494" y="13" width="1" height="3" fill="#8e8e8e"/><rect x="500" y="13" width="1" height="3" fill="#8e8e8e"/><rect x="506" y="13" width="1" height="3" fill="#8e8e8e"/><rect x="511" y="13" width="1" height="3" fill="#8e8e8e"/><rect x="517" y="11" width="1" height="5" fill="#8e8e8e"/><rect x="523" y="13" width="1" height="3" fill="#8e8e8e"/><rect x="528" y="13" width="1" height="3" fill="#8e8e8e"/><rect x="534" y="13" width="1" height="3" fill="#8e8e8e"/><rect x="540" y="13" width="1" height="3" fill="#8e8e8e"/><rect x="545" y="0" width="1" height="16" fill="#8e8e8e"/><text x="549" y="10" font-size="9" fill="#d0d0d0" font-family="Liberation Sans, sans-serif">10</text><rect x="551" y="13" width="1" height="3" fill="#8e8e8e"/><rect x="557" y="13" width="1" height="3" fill="#8e8e8e"/><rect x="562" y="13" width="1" height="3" fill="#8e8e8e"/><rect x="568" y="13" width="1" height="3" fill="#8e8e8e"/><rect x="574" y="11" width="1" height="5" fill="#8e8e8e"/><rect x="579" y="13" width="1" height="3" fill="#8e8e8e"/><rect x="585" y="13" width="1" height="3" fill="#8e8e8e"/><rect x="591" y="13" width="1" height="3" fill="#8e8e8e"/><rect x="596" y="13" width="1" height="3" fill="#8e8e8e"/><rect x="602" y="0" width="1" height="16" fill="#8e8e8e"/><text x="606" y="10" font-size="9" fill="#d0d0d0" font-family="Liberation Sans, sans-serif">12</text><rect x="608" y="13" width="1" height="3" fill="#8e8e8e"/><rect x="613" y="13" width="1" height="3" fill="#8e8e8e"/><rect x="619" y="13" width="1" height="3" fill="#8e8e8e"/><rect x="625" y="13" width="1" height="3" fill="#8e8e8e"/><rect x="630" y="11" width="1" height="5" fill="#8e8e8e"/><rect x="636" y="13" width="1" height="3" fill="#8e8e8e"/><rect x="642" y="13" width="1" height="3" fill="#8e8e8e"/><rect x="647" y="13" width="1" height="3" fill="#8e8e8e"/><rect x="653" y="13" width="1" height="3" fill="#8e8e8e"/><rect x="659" y="0" width="1" height="16" fill="#8e8e8e"/><text x="663" y="10" font-size="9" fill="#d0d0d0" font-family="Liberation Sans, sans-serif">14</text><rect x="664" y="13" width="1" height="3" fill="#8e8e8e"/><rect x="670" y="13" width="1" height="3" fill="#8e8e8e"/><rect x="676" y="13" width="1" height="3" fill="#8e8e8e"/><rect x="681" y="13" width="1" height="3" fill="#8e8e8e"/><rect x="687" y="11" width="1" height="5" fill="#8e8e8e"/><rect x="693" y="13" width="1" height="3" fill="#8e8e8e"/><rect x="698" y="13" width="1" height="3" fill="#8e8e8e"/><rect x="704" y="13" width="1" height="3" fill="#8e8e8e"/><rect x="710" y="13" width="1" height="3" fill="#8e8e8e"/><rect x="715" y="0" width="1" height="16" fill="#8e8e8e"/><text x="719" y="10" font-size="9" fill="#d0d0d0" font-family="Liberation Sans, sans-serif">16</text><rect x="721" y="13" width="1" height="3" fill="#8e8e8e"/><rect x="727" y="13" width="1" height="3" fill="#8e8e8e"/><rect x="732" y="13" width="1" height="3" fill="#8e8e8e"/><rect x="738" y="13" width="1" height="3" fill="#8e8e8e"/><rect x="744" y="11" width="1" height="5" fill="#8e8e8e"/><rect x="750" y="13" width="1" height="3" fill="#8e8e8e"/><rect x="755" y="13" width="1" height="3" fill="#8e8e8e"/><rect x="761" y="13" width="1" height="3" fill="#8e8e8e"/><rect x="767" y="13" width="1" height="3" fill="#8e8e8e"/><rect x="772" y="0" width="1" height="16" fill="#8e8e8e"/><text x="776" y="10" font-size="9" fill="#d0d0d0" font-family="Liberation Sans, sans-serif">18</text><rect x="778" y="13" width="1" height="3" fill="#8e8e8e"/><rect x="784" y="13" width="1" height="3" fill="#8e8e8e"/><rect x="789" y="13" width="1" height="3" fill="#8e8e8e"/><rect x="795" y="13" width="1" height="3" fill="#8e8e8e"/><rect x="801" y="11" width="1" height="5" fill="#8e8e8e"/><rect x="806" y="13" width="1" height="3" fill="#8e8e8e"/><rect x="812" y="13" width="1" height="3" fill="#8e8e8e"/><rect x="818" y="13" width="1" height="3" fill="#8e8e8e"/><rect x="823" y="13" width="1" height="3" fill="#8e8e8e"/><rect x="829" y="0" width="1" height="16" fill="#8e8e8e"/><text x="833" y="10" font-size="9" fill="#d0d0d0" font-family="Liberation Sans, sans-serif">20</text><rect x="835" y="13" width="1" height="3" fill="#8e8e8e"/><rect x="840" y="13" width="1" height="3" fill="#8e8e8e"/><rect x="846" y="13" width="1" height="3" fill="#8e8e8e"/><rect x="852" y="13" width="1" height="3" fill="#8e8e8e"/><rect x="857" y="11" width="1" height="5" fill="#8e8e8e"/><rect x="863" y="13" width="1" height="3" fill="#8e8e8e"/><rect x="869" y="13" width="1" height="3" fill="#8e8e8e"/><rect x="874" y="13" width="1" height="3" fill="#8e8e8e"/><rect x="880" y="13" width="1" height="3" fill="#8e8e8e"/><rect x="886" y="0" width="1" height="16" fill="#8e8e8e"/><text x="890" y="10" font-size="9" fill="#d0d0d0" font-family="Liberation Sans, sans-serif">22</text><rect x="891" y="13" width="1" height="3" fill="#8e8e8e"/><rect x="897" y="13" width="1" height="3" fill="#8e8e8e"/><rect x="903" y="13" width="1" height="3" fill="#8e8e8e"/><rect x="908" y="13" width="1" height="3" fill="#8e8e8e"/><rect x="914" y="11" width="1" height="5" fill="#8e8e8e"/><rect x="920" y="13" width="1" height="3" fill="#8e8e8e"/><rect x="925" y="13" width="1" height="3" fill="#8e8e8e"/><rect x="931" y="13" width="1" height="3" fill="#8e8e8e"/><rect x="937" y="13" width="1" height="3" fill="#8e8e8e"/><rect x="942" y="0" width="1" height="16" fill="#8e8e8e"/><text x="946" y="10" font-size="9" fill="#d0d0d0" font-family="Liberation Sans, sans-serif">24</text><rect x="948" y="13" width="1" height="3" fill="#8e8e8e"/><rect x="954" y="13" width="1" height="3" fill="#8e8e8e"/><rect x="959" y="13" width="1" height="3" fill="#8e8e8e"/><rect x="965" y="13" width="1" height="3" fill="#8e8e8e"/><rect x="971" y="11" width="1" height="5" fill="#8e8e8e"/><rect x="976" y="13" width="1" height="3" fill="#8e8e8e"/><rect x="982" y="13" width="1" height="3" fill="#8e8e8e"/><rect x="988" y="13" width="1" height="3" fill="#8e8e8e"/><rect x="993" y="13" width="1" height="3" fill="#8e8e8e"/><rect x="999" y="0" width="1" height="16" fill="#8e8e8e"/><text x="1003" y="10" font-size="9" fill="#d0d0d0" font-family="Liberation Sans, sans-serif">26</text><rect x="1005" y="13" width="1" height="3" fill="#8e8e8e"/><rect x="1010" y="13" width="1" height="3" fill="#8e8e8e"/><rect x="1016" y="13" width="1" height="3" fill="#8e8e8e"/><rect x="1022" y="13" width="1" height="3" fill="#8e8e8e"/><rect x="1027" y="11" width="1" height="5" fill="#8e8e8e"/><rect x="1033" y="13" width="1" height="3" fill="#8e8e8e"/><rect x="1039" y="13" width="1" height="3" fill="#8e8e8e"/><rect x="1044" y="13" width="1" height="3" fill="#8e8e8e"/><rect x="1050" y="13" width="1" height="3" fill="#8e8e8e"/><rect x="1056" y="0" width="1" height="16" fill="#8e8e8e"/><text x="1060" y="10" font-size="9" fill="#d0d0d0" font-family="Liberation Sans, sans-serif">28</text><rect x="1061" y="13" width="1" height="3" fill="#8e8e8e"/><rect x="1067" y="13" width="1" height="3" fill="#8e8e8e"/><rect x="1073" y="13" width="1" height="3" fill="#8e8e8e"/><rect x="1078" y="13" width="1" height="3" fill="#8e8e8e"/><rect x="1084" y="11" width="1" height="5" fill="#8e8e8e"/><rect x="1090" y="13" width="1" height="3" fill="#8e8e8e"/><rect x="1095" y="13" width="1" height="3" fill="#8e8e8e"/><rect x="1101" y="13" width="1" height="3" fill="#8e8e8e"/><rect x="1107" y="13" width="1" height="3" fill="#8e8e8e"/><rect x="1112" y="0" width="1" height="16" fill="#8e8e8e"/><text x="1116" y="10" font-size="9" fill="#d0d0d0" font-family="Liberation Sans, sans-serif">30</text><rect x="1118" y="13" width="1" height="3" fill="#8e8e8e"/><rect x="1124" y="13" width="1" height="3" fill="#8e8e8e"/><rect x="1129" y="13" width="1" height="3" fill="#8e8e8e"/><rect x="1135" y="13" width="1" height="3" fill="#8e8e8e"/><rect x="1141" y="11" width="1" height="5" fill="#8e8e8e"/><rect x="1146" y="13" width="1" height="3" fill="#8e8e8e"/><rect x="1152" y="13" width="1" height="3" fill="#8e8e8e"/><rect x="1158" y="13" width="1" height="3" fill="#8e8e8e"/><rect x="1163" y="13" width="1" height="3" fill="#8e8e8e"/><rect x="1169" y="0" width="1" height="16" fill="#8e8e8e"/><text x="1173" y="10" font-size="9" fill="#d0d0d0" font-family="Liberation Sans, sans-serif">32</text><rect x="1175" y="13" width="1" height="3" fill="#8e8e8e"/><rect x="1181" y="13" width="1" height="3" fill="#8e8e8e"/><rect x="1186" y="13" width="1" height="3" fill="#8e8e8e"/><rect x="1192" y="13" width="1" height="3" fill="#8e8e8e"/><rect x="1198" y="11" width="1" height="5" fill="#8e8e8e"/><rect x="1203" y="13" width="1" height="3" fill="#8e8e8e"/><rect x="1209" y="13" width="1" height="3" fill="#8e8e8e"/><rect x="1215" y="13" width="1" height="3" fill="#8e8e8e"/><rect x="1220" y="13" width="1" height="3" fill="#8e8e8e"/><rect x="1226" y="0" width="1" height="16" fill="#8e8e8e"/><text x="1230" y="10" font-size="9" fill="#d0d0d0" font-family="Liberation Sans, sans-serif">34</text><rect x="1232" y="13" width="1" height="3" fill="#8e8e8e"/><rect x="1237" y="13" width="1" height="3" fill="#8e8e8e"/><rect x="1243" y="13" width="1" height="3" fill="#8e8e8e"/><rect x="900" y="1" width="1" height="1" fill="#f0f0f0"/><rect x="900" y="3" width="1" height="1" fill="#f0f0f0"/><rect x="900" y="5" width="1" height="1" fill="#f0f0f0"/><rect x="900" y="7" width="1" height="1" fill="#f0f0f0"/><rect x="900" y="9" width="1" height="1" fill="#f0f0f0"/><rect x="900" y="11" width="1" height="1" fill="#f0f0f0"/><rect x="900" y="13" width="1" height="1" fill="#f0f0f0"/><rect x="900" y="15" width="1" height="1" fill="#f0f0f0"/></svg>
<svg width="17" height="723" style="position:absolute;left:41px;top:99px" shape-rendering="crispEdges"><rect x="16" y="0" width="1" height="723" fill="#8e8e8e"/><rect x="12" y="1" width="4" height="1" fill="#8e8e8e"/><rect x="12" y="7" width="4" height="1" fill="#8e8e8e"/><rect x="12" y="13" width="4" height="1" fill="#8e8e8e"/><rect x="10" y="18" width="6" height="1" fill="#8e8e8e"/><rect x="12" y="24" width="4" height="1" fill="#8e8e8e"/><rect x="12" y="30" width="4" height="1" fill="#8e8e8e"/><rect x="12" y="35" width="4" height="1" fill="#8e8e8e"/><rect x="12" y="41" width="4" height="1" fill="#8e8e8e"/><rect x="0" y="47" width="16" height="1" fill="#8e8e8e"/><text x="3" y="57" font-size="9" fill="#d0d0d0" font-family="Liberation Sans, sans-serif">0</text><rect x="12" y="52" width="4" height="1" fill="#8e8e8e"/><rect x="12" y="58" width="4" height="1" fill="#8e8e8e"/><rect x="12" y="64" width="4" height="1" fill="#8e8e8e"/><rect x="12" y="69" width="4" height="1" fill="#8e8e8e"/><rect x="10" y="75" width="6" height="1" fill="#8e8e8e"/><rect x="12" y="81" width="4" height="1" fill="#8e8e8e"/><rect x="12" y="86" width="4" height="1" fill="#8e8e8e"/><rect x="12" y="92" width="4" height="1" fill="#8e8e8e"/><rect x="12" y="98" width="4" height="1" fill="#8e8e8e"/><rect x="0" y="104" width="16" height="1" fill="#8e8e8e"/><text x="3" y="114" font-size="9" fill="#d0d0d0" font-family="Liberation Sans, sans-serif">2</text><rect x="12" y="109" width="4" height="1" fill="#8e8e8e"/><rect x="12" y="115" width="4" height="1" fill="#8e8e8e"/><rect x="12" y="121" width="4" height="1" fill="#8e8e8e"/><rect x="12" y="126" width="4" height="1" fill="#8e8e8e"/><rect x="10" y="132" width="6" height="1" fill="#8e8e8e"/><rect x="12" y="138" width="4" height="1" fill="#8e8e8e"/><rect x="12" y="143" width="4" height="1" fill="#8e8e8e"/><rect x="12" y="149" width="4" height="1" fill="#8e8e8e"/><rect x="12" y="155" width="4" height="1" fill="#8e8e8e"/><rect x="0" y="160" width="16" height="1" fill="#8e8e8e"/><text x="3" y="170" font-size="9" fill="#d0d0d0" font-family="Liberation Sans, sans-serif">4</text><rect x="12" y="166" width="4" height="1" fill="#8e8e8e"/><rect x="12" y="172" width="4" height="1" fill="#8e8e8e"/><rect x="12" y="177" width="4" height="1" fill="#8e8e8e"/><rect x="12" y="183" width="4" height="1" fill="#8e8e8e"/><rect x="10" y="189" width="6" height="1" fill="#8e8e8e"/><rect x="12" y="194" width="4" height="1" fill="#8e8e8e"/><rect x="12" y="200" width="4" height="1" fill="#8e8e8e"/><rect x="12" y="206" width="4" height="1" fill="#8e8e8e"/><rect x="12" y="211" width="4" height="1" fill="#8e8e8e"/><rect x="0" y="217" width="16" height="1" fill="#8e8e8e"/><text x="3" y="227" font-size="9" fill="#d0d0d0" font-family="Liberation Sans, sans-serif">6</text><rect x="12" y="223" width="4" height="1" fill="#8e8e8e"/><rect x="12" y="228" width="4" height="1" fill="#8e8e8e"/><rect x="12" y="234" width="4" height="1" fill="#8e8e8e"/><rect x="12" y="240" width="4" height="1" fill="#8e8e8e"/><rect x="10" y="245" width="6" height="1" fill="#8e8e8e"/><rect x="12" y="251" width="4" height="1" fill="#8e8e8e"/><rect x="12" y="257" width="4" height="1" fill="#8e8e8e"/><rect x="12" y="262" width="4" height="1" fill="#8e8e8e"/><rect x="12" y="268" width="4" height="1" fill="#8e8e8e"/><rect x="0" y="274" width="16" height="1" fill="#8e8e8e"/><text x="3" y="284" font-size="9" fill="#d0d0d0" font-family="Liberation Sans, sans-serif">8</text><rect x="12" y="279" width="4" height="1" fill="#8e8e8e"/><rect x="12" y="285" width="4" height="1" fill="#8e8e8e"/><rect x="12" y="291" width="4" height="1" fill="#8e8e8e"/><rect x="12" y="296" width="4" height="1" fill="#8e8e8e"/><rect x="10" y="302" width="6" height="1" fill="#8e8e8e"/><rect x="12" y="308" width="4" height="1" fill="#8e8e8e"/><rect x="12" y="313" width="4" height="1" fill="#8e8e8e"/><rect x="12" y="319" width="4" height="1" fill="#8e8e8e"/><rect x="12" y="325" width="4" height="1" fill="#8e8e8e"/><rect x="0" y="330" width="16" height="1" fill="#8e8e8e"/><text x="3" y="340" font-size="9" fill="#d0d0d0" font-family="Liberation Sans, sans-serif">1</text><text x="3" y="350" font-size="9" fill="#d0d0d0" font-family="Liberation Sans, sans-serif">0</text><rect x="12" y="336" width="4" height="1" fill="#8e8e8e"/><rect x="12" y="342" width="4" height="1" fill="#8e8e8e"/><rect x="12" y="347" width="4" height="1" fill="#8e8e8e"/><rect x="12" y="353" width="4" height="1" fill="#8e8e8e"/><rect x="10" y="359" width="6" height="1" fill="#8e8e8e"/><rect x="12" y="364" width="4" height="1" fill="#8e8e8e"/><rect x="12" y="370" width="4" height="1" fill="#8e8e8e"/><rect x="12" y="376" width="4" height="1" fill="#8e8e8e"/><rect x="12" y="381" width="4" height="1" fill="#8e8e8e"/><rect x="0" y="387" width="16" height="1" fill="#8e8e8e"/><text x="3" y="397" font-size="9" fill="#d0d0d0" font-family="Liberation Sans, sans-serif">1</text><text x="3" y="407" font-size="9" fill="#d0d0d0" font-family="Liberation Sans, sans-serif">2</text><rect x="12" y="393" width="4" height="1" fill="#8e8e8e"/><rect x="12" y="398" width="4" height="1" fill="#8e8e8e"/><rect x="12" y="404" width="4" height="1" fill="#8e8e8e"/><rect x="12" y="410" width="4" height="1" fill="#8e8e8e"/><rect x="10" y="415" width="6" height="1" fill="#8e8e8e"/><rect x="12" y="421" width="4" height="1" fill="#8e8e8e"/><rect x="12" y="427" width="4" height="1" fill="#8e8e8e"/><rect x="12" y="432" width="4" height="1" fill="#8e8e8e"/><rect x="12" y="438" width="4" height="1" fill="#8e8e8e"/><rect x="0" y="444" width="16" height="1" fill="#8e8e8e"/><text x="3" y="454" font-size="9" fill="#d0d0d0" font-family="Liberation Sans, sans-serif">1</text><text x="3" y="464" font-size="9" fill="#d0d0d0" font-family="Liberation Sans, sans-serif">4</text><rect x="12" y="449" width="4" height="1" fill="#8e8e8e"/><rect x="12" y="455" width="4" height="1" fill="#8e8e8e"/><rect x="12" y="461" width="4" height="1" fill="#8e8e8e"/><rect x="12" y="466" width="4" height="1" fill="#8e8e8e"/><rect x="10" y="472" width="6" height="1" fill="#8e8e8e"/><rect x="12" y="478" width="4" height="1" fill="#8e8e8e"/><rect x="12" y="483" width="4" height="1" fill="#8e8e8e"/><rect x="12" y="489" width="4" height="1" fill="#8e8e8e"/><rect x="12" y="495" width="4" height="1" fill="#8e8e8e"/><rect x="0" y="500" width="16" height="1" fill="#8e8e8e"/><text x="3" y="510" font-size="9" fill="#d0d0d0" font-family="Liberation Sans, sans-serif">1</text><text x="3" y="520" font-size="9" fill="#d0d0d0" font-family="Liberation Sans, sans-serif">6</text><rect x="12" y="506" width="4" height="1" fill="#8e8e8e"/><rect x="12" y="512" width="4" height="1" fill="#8e8e8e"/><rect x="12" y="517" width="4" height="1" fill="#8e8e8e"/><rect x="12" y="523" width="4" height="1" fill="#8e8e8e"/><rect x="10" y="529" width="6" height="1" fill="#8e8e8e"/><rect x="12" y="535" width="4" height="1" fill="#8e8e8e"/><rect x="12" y="540" width="4" height="1" fill="#8e8e8e"/><rect x="12" y="546" width="4" height="1" fill="#8e8e8e"/><rect x="12" y="552" width="4" height="1" fill="#8e8e8e"/><rect x="0" y="557" width="16" height="1" fill="#8e8e8e"/><text x="3" y="567" font-size="9" fill="#d0d0d0" font-family="Liberation Sans, sans-serif">1</text><text x="3" y="577" font-size="9" fill="#d0d0d0" font-family="Liberation Sans, sans-serif">8</text><rect x="12" y="563" width="4" height="1" fill="#8e8e8e"/><rect x="12" y="569" width="4" height="1" fill="#8e8e8e"/><rect x="12" y="574" width="4" height="1" fill="#8e8e8e"/><rect x="12" y="580" width="4" height="1" fill="#8e8e8e"/><rect x="10" y="586" width="6" height="1" fill="#8e8e8e"/><rect x="12" y="591" width="4" height="1" fill="#8e8e8e"/><rect x="12" y="597" width="4" height="1" fill="#8e8e8e"/><rect x="12" y="603" width="4" height="1" fill="#8e8e8e"/><rect x="12" y="608" width="4" height="1" fill="#8e8e8e"/><rect x="0" y="614" width="16" height="1" fill="#8e8e8e"/><text x="3" y="624" font-size="9" fill="#d0d0d0" font-family="Liberation Sans, sans-serif">2</text><text x="3" y="634" font-size="9" fill="#d0d0d0" font-family="Liberation Sans, sans-serif">0</text><rect x="12" y="620" width="4" height="1" fill="#8e8e8e"/><rect x="12" y="625" width="4" height="1" fill="#8e8e8e"/><rect x="12" y="631" width="4" height="1" fill="#8e8e8e"/><rect x="12" y="637" width="4" height="1" fill="#8e8e8e"/><rect x="10" y="642" width="6" height="1" fill="#8e8e8e"/><rect x="12" y="648" width="4" height="1" fill="#8e8e8e"/><rect x="12" y="654" width="4" height="1" fill="#8e8e8e"/><rect x="12" y="659" width="4" height="1" fill="#8e8e8e"/><rect x="12" y="665" width="4" height="1" fill="#8e8e8e"/><rect x="0" y="671" width="16" height="1" fill="#8e8e8e"/><text x="3" y="681" font-size="9" fill="#d0d0d0" font-family="Liberation Sans, sans-serif">2</text><text x="3" y="691" font-size="9" fill="#d0d0d0" font-family="Liberation Sans, sans-serif">2</text><rect x="12" y="676" width="4" height="1" fill="#8e8e8e"/><rect x="12" y="682" width="4" height="1" fill="#8e8e8e"/><rect x="12" y="688" width="4" height="1" fill="#8e8e8e"/><rect x="12" y="693" width="4" height="1" fill="#8e8e8e"/><rect x="10" y="699" width="6" height="1" fill="#8e8e8e"/><rect x="12" y="705" width="4" height="1" fill="#8e8e8e"/><rect x="12" y="710" width="4" height="1" fill="#8e8e8e"/><rect x="12" y="716" width="4" height="1" fill="#8e8e8e"/><rect x="12" y="722" width="4" height="1" fill="#8e8e8e"/><rect x="1" y="239" width="1" height="1" fill="#f0f0f0"/><rect x="3" y="239" width="1" height="1" fill="#f0f0f0"/><rect x="5" y="239" width="1" height="1" fill="#f0f0f0"/><rect x="7" y="239" width="1" height="1" fill="#f0f0f0"/><rect x="9" y="239" width="1" height="1" fill="#f0f0f0"/><rect x="11" y="239" width="1" height="1" fill="#f0f0f0"/><rect x="13" y="239" width="1" height="1" fill="#f0f0f0"/><rect x="15" y="239" width="1" height="1" fill="#f0f0f0"/></svg>
<div class="a" style="left:318px;top:145px;width:802px;height:700px;background:#fff;border:1px solid #141414"></div>
<svg class="a" style="left:0;top:0" width="1304" height="822"><path d="M730.70 507.60 C719.15 478.22 690.17 452.99 657.75 452.99 C633.51 452.99 587.33 471.19 587.33 545.10 C587.33 622.97 691.90 625.65 731.10 704.80 C765.18 629.10 874.46 621.11 874.46 544.70 C874.46 481.75 836.55 454.17 801.72 454.17 C766.66 454.17 744.42 479.55 730.70 507.60Z" fill="#fc0303" stroke="#7a4040" stroke-width="0.8"/></svg>
</body></html>
